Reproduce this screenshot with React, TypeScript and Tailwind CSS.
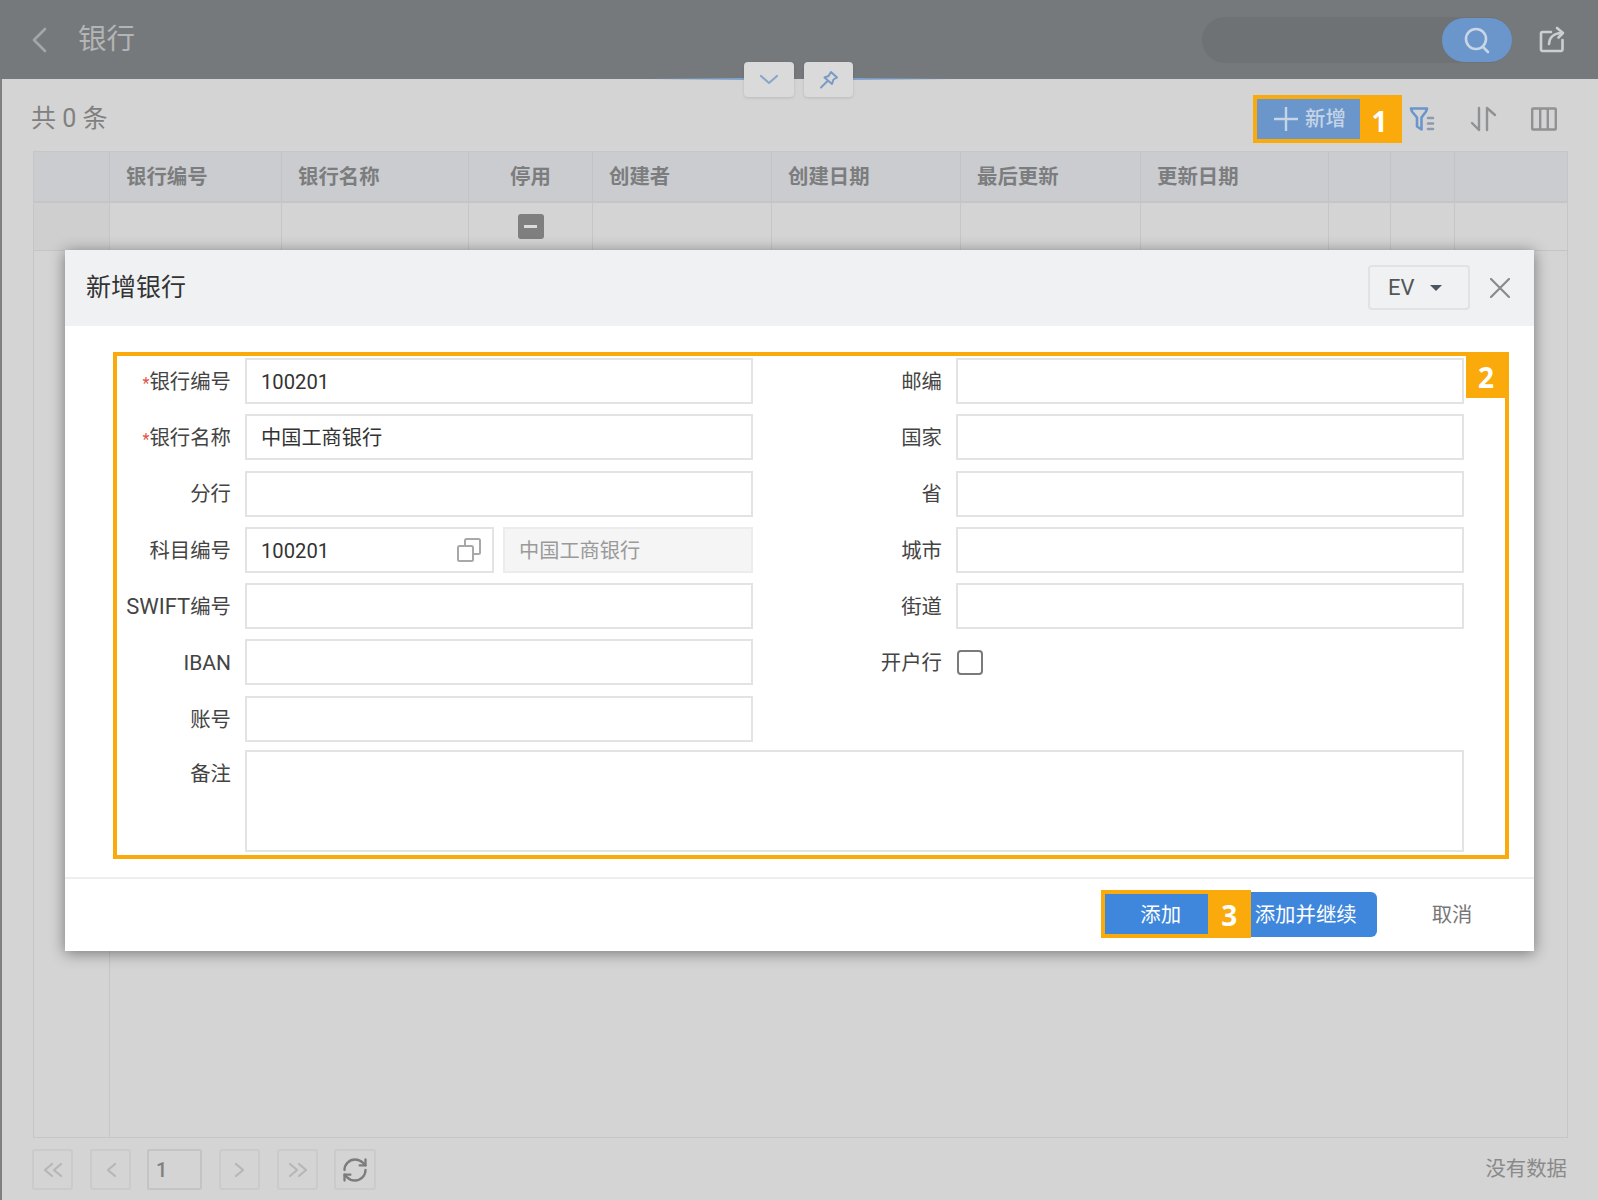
import React from "react";
import { RefreshCw } from "lucide-react";

const cols = [
  { w: "w-[76px]", t: "" },
  { w: "w-[172px]", t: "银行编号" },
  { w: "w-[187px]", t: "银行名称" },
  { w: "w-[124px]", t: "停用", c: true },
  { w: "w-[179px]", t: "创建者" },
  { w: "w-[189px]", t: "创建日期" },
  { w: "w-[180px]", t: "最后更新" },
  { w: "w-[188px]", t: "更新日期" },
  { w: "w-[62px]", t: "" },
  { w: "w-[64px]", t: "" },
  { w: "w-[112px]", t: "" },
];

function Field({ label, req, labelW, children }: { label: React.ReactNode; req?: boolean; labelW: string; children?: React.ReactNode }) {
  return (
    <div className="flex items-center h-[46px]">
      <div className={`${labelW} shrink-0 text-right text-[20.4px] text-[#444] pr-[14px] leading-none pt-[2px]`}>
        {req && <span className="text-[#e0533d] text-[16px]">*</span>}
        {label}
      </div>
      {children ?? <div className="h-[46px] flex-1 bg-white border-2 border-[#e3e3e3]" />}
    </div>
  );
}

function TextBox({ value }: { value: string }) {
  return (
    <div className="h-[46px] flex-1 bg-white border-2 border-[#e3e3e3] flex items-center pl-[14px] pt-[2px] text-[20.2px] text-[#333]">{value}</div>
  );
}

function PageBtn({ w = "w-[41px]", children }: { w?: string; children: React.ReactNode }) {
  return (
    <div className={`${w} h-[41px] border-2 border-[#cbcbcb] rounded-[3px] flex items-center justify-center text-[#b4b4b4]`}>{children}</div>
  );
}

function Badge({ children, className }: { children: React.ReactNode; className: string }) {
  return (
    <div className={`[font-family:'Open_Sans',sans-serif] font-bold text-white text-[28px] leading-none flex items-center justify-center ${className}`}>{children}</div>
  );
}

function Chev({ d }: { d: string }) {
  return (
    <svg width="20" height="16" viewBox="0 0 20 16" fill="none" stroke="#b6b6b6" strokeWidth="2.2" strokeLinecap="round" strokeLinejoin="round">
      <path d={d} />
    </svg>
  );
}

export default function App() {
  return (
    <div className="relative w-[1598px] h-[1200px] overflow-hidden bg-[#d4d4d4] flex flex-col [font-family:Roboto,'Noto_Sans_CJK_SC',sans-serif]">
      {/* header */}
      <header className="h-[79px] shrink-0 bg-[#76797b] flex items-center pl-[31px] pr-[33px]">
        <svg width="16" height="26" viewBox="0 0 16 26" fill="none" stroke="#a4a6a7" strokeWidth="2.6" strokeLinecap="round" strokeLinejoin="round">
          <path d="M14 2 L3 13 L14 24" />
        </svg>
        <div className="ml-[31px] mt-[2px] text-[28.5px] text-[#b3b4b5] leading-none">银行</div>
        <div className="ml-auto w-[310px] h-[46px] rounded-full bg-[#6f7274] flex justify-end items-center">
          <div className="w-[70px] h-[44px] rounded-full bg-[#6a96cc] flex items-center justify-center">
            <svg width="28" height="28" viewBox="0 0 28 28" fill="none" stroke="#c9d6e6" strokeWidth="2.6" strokeLinecap="round">
              <circle cx="13" cy="13" r="10" />
              <path d="M20 21 L25 26" />
            </svg>
          </div>
        </div>
        <svg className="ml-[27px] mt-[-1px]" width="26" height="27" viewBox="0 0 26 27" fill="none" stroke="#cdcecf" strokeWidth="2.6" strokeLinecap="round" strokeLinejoin="round">
          <path d="M12 6 H3.5 a1.5 1.5 0 0 0 -1.5 1.5 V23.5 a1.5 1.5 0 0 0 1.5 1.5 H22 a1.5 1.5 0 0 0 1.5 -1.5 V14" />
          <path d="M10 18 C10.5 11 14 7.5 23 7 M18 2 L24 7 L19.5 11.5" />
        </svg>
      </header>

      {/* collapse tabs */}
      <div className="absolute left-[650px] top-[78px] w-[94px] h-[2px] bg-gradient-to-r from-transparent to-[#7fa3cf]" />
      <div className="absolute left-[853px] top-[78px] w-[100px] h-[2px] bg-gradient-to-l from-transparent to-[#7fa3cf]" />
      <div className="absolute left-[744px] top-[62px] w-[50px] h-[35px] bg-[#dadada] rounded-[4px] shadow-[0_1px_3px_rgba(0,0,0,0.12)] flex items-center justify-center">
        <svg width="20" height="11" viewBox="0 0 20 11" fill="none" stroke="#8aa6c9" strokeWidth="2.2" strokeLinecap="round" strokeLinejoin="round">
          <path d="M2 2 L10 9 L18 2" />
        </svg>
      </div>
      <div className="absolute left-[804px] top-[62px] w-[49px] h-[35px] bg-[#dadada] rounded-[4px] shadow-[0_1px_3px_rgba(0,0,0,0.12)] flex items-center justify-center">
        <svg width="20" height="20" viewBox="0 0 20 20" fill="none" stroke="#7a9bc6" strokeWidth="2" strokeLinecap="round" strokeLinejoin="round">
          <path d="M12 2 L18 7.5 L14.5 9.5 L13 14 L5.5 7.5 L9.5 6 Z" />
          <path d="M8 11.5 L2 17.5" />
        </svg>
      </div>

      <div className="flex-1 flex flex-col border-l-2 border-[#808080] pl-[31px] pr-[30px] min-h-0">
        {/* toolbar */}
        <div className="h-[72px] shrink-0 flex items-center">
          <div className="text-[25px] text-[#808080] leading-none mt-[6px] -ml-[2px]">共 0 条</div>
          <div className="ml-auto flex items-center mt-[8px] mr-[11px]">
            <div className="w-[149px] h-[48px] bg-[#fbaa0c] flex items-center pl-[4px]">
              <div className="w-[103px] h-[40px] bg-[#6a96cc] flex items-center pl-[17px] text-[#c6d4e5] text-[20.4px] font-medium leading-none">
                <svg width="24" height="24" viewBox="0 0 24 24" stroke="#c6d4e5" strokeWidth="2.4" className="shrink-0">
                  <path d="M12 0 V24 M0 12 H24" />
                </svg>
                <span className="ml-[7px] whitespace-nowrap">新增</span>
              </div>
              <Badge className="w-[42px] h-[40px] pr-[3px] pt-[3px]">1</Badge>
            </div>
            <svg className="ml-[7px]" width="27" height="26" viewBox="0 0 27 26" fill="none" stroke="#6a96cc" strokeWidth="2.6" strokeLinejoin="round" strokeLinecap="round">
              <path d="M2 2.5 H18 L17 5.5 L12.5 11.5 V23.5 L8 20.5 V11.5 L3 5.5 Z" />
              <path d="M19 12 H24 M19 17.5 H24 M19 23 H24" stroke="#8a9bb0" />
            </svg>
            <svg className="ml-[34px]" width="27" height="26" viewBox="0 0 27 26" fill="none" stroke="#8f9193" strokeWidth="2.4" strokeLinecap="round" strokeLinejoin="round">
              <path d="M9 2 V24 L2 17" />
              <path d="M17 24 V2 L25 9" />
            </svg>
            <svg className="ml-[34px]" width="26" height="24" viewBox="0 0 26 24" fill="none" stroke="#8f9193" strokeWidth="2.4" strokeLinejoin="round">
              <rect x="1.2" y="1.5" width="23.6" height="21" rx="1" />
              <path d="M9.2 1.5 V22.5 M16.8 1.5 V22.5" />
            </svg>
          </div>
        </div>

        {/* table */}
        <div className="w-[1535px] h-[987px] shrink-0 border border-[#c6c6c6] flex flex-col">
          <div className="h-[51px] shrink-0 flex bg-[#cbcccf] border-b-2 border-[#c4c5c7]">
            {cols.map((c, i) => (
              <div key={i} className={`${c.w} shrink-0 border-r border-[#c2c3c5] last:border-r-0 flex items-center pt-[2px] text-[20.4px] font-bold text-[#7c7d7f] leading-none ${c.c ? "justify-center" : "pl-[16px]"}`}>
                {c.t}
              </div>
            ))}
          </div>
          <div className="h-[48px] shrink-0 flex border-b border-[#c4c5c7]">
            {cols.map((c, i) => (
              <div key={i} className={`${c.w} shrink-0 border-r border-[#c6c6c6] last:border-r-0 flex items-center justify-center ${i === 0 ? "bg-[#cfcfd0]" : ""}`}>
                {c.c && (
                  <div className="w-[26px] h-[25px] rounded-[3px] bg-[#7f7f7f] flex items-center justify-center">
                    <div className="w-[13px] h-[3px] bg-[#dcdcdc]" />
                  </div>
                )}
              </div>
            ))}
          </div>
          <div className="flex-1 flex">
            <div className="w-[76px] border-r border-[#c6c6c6]" />
          </div>
        </div>

        {/* pager */}
        <div className="flex-1 flex items-start pt-[11px] -ml-[1px]">
          <PageBtn><Chev d="M9 2 L2 8 L9 14 M18 2 L11 8 L18 14" /></PageBtn>
          <div className="ml-[17px]">
            <PageBtn><Chev d="M14 2 L7 8 L14 14" /></PageBtn>
          </div>
          <div className="ml-[16px] w-[55px] h-[41px] border-2 border-[#c4c4c4] rounded-[2px] flex items-center pl-[7px] text-[20px] font-medium text-[#808080]">1</div>
          <div className="ml-[17px]">
            <PageBtn><Chev d="M6 2 L13 8 L6 14" /></PageBtn>
          </div>
          <div className="ml-[17px]">
            <PageBtn><Chev d="M2 2 L9 8 L2 14 M11 2 L18 8 L11 14" /></PageBtn>
          </div>
          <div className="ml-[16px]">
            <PageBtn w="w-[42px]"><RefreshCw size={28} strokeWidth={2} className="text-[#7c7c7c]" /></PageBtn>
          </div>
          <div className="ml-auto mt-[10px] mr-[1px] text-[20.4px] text-[#8a8a8a] leading-none">没有数据</div>
        </div>
      </div>

      {/* modal */}
      <div className="absolute left-[65px] top-[250px] w-[1469px] h-[701px] bg-white shadow-[0_2px_14px_rgba(0,0,0,0.45)] flex flex-col">
        <div className="h-[76px] shrink-0 bg-[#eff1f3] flex items-center pl-[21px] pr-[24px]">
          <div className="text-[25px] text-[#333] leading-none mt-[-2px]">新增银行</div>
          <div className="ml-auto w-[102px] h-[45px] border-2 border-[#e0e2e4] rounded-[4px] flex items-center pl-[18px] text-[22px] text-[#555] leading-none mt-[-1px]">
            EV
            <span className="ml-[15px] w-0 h-0 border-l-[6px] border-r-[6px] border-t-[6px] border-l-transparent border-r-transparent border-t-[#4a5560]" />
          </div>
          <svg className="ml-[20px]" width="20" height="20" viewBox="0 0 20 20" stroke="#8a8a8a" strokeWidth="2.2" strokeLinecap="round">
            <path d="M1 1 L19 19 M19 1 L1 19" />
          </svg>
        </div>

        <div className="relative pt-[32px] flex-1">
          {/* annotation 2 */}
          <div className="absolute left-[48px] top-[26px] w-[1396px] h-[507px] border-4 border-[#fbaa0c] pointer-events-none">
            <Badge className="absolute right-[-4px] top-[-4px] w-[43px] h-[46px] bg-[#fbaa0c] pt-[3px] pr-[3px]">2</Badge>
          </div>
          <div className="flex">
            <div className="w-[687.5px] flex flex-col gap-y-[10.3px]">
              <Field label="银行编号" req labelW="w-[180px]"><TextBox value="100201" /></Field>
              <Field label="银行名称" req labelW="w-[180px]"><TextBox value="中国工商银行" /></Field>
              <Field label="分行" labelW="w-[180px]" />
              <Field label="科目编号" labelW="w-[180px]">
                <div className="flex flex-1 gap-[9px]">
                  <div className="w-[249px] h-[46px] bg-white border-2 border-[#e3e3e3] flex items-center pl-[14px] pr-[11px] pt-[2px] text-[20.2px] text-[#333]">
                    100201
                    <svg className="ml-auto mt-[-2px]" width="24" height="24" viewBox="0 0 24 24" fill="none" stroke="#a8a8a8" strokeWidth="2" strokeLinejoin="round">
                      <rect x="1" y="8" width="15" height="15" rx="1.5" />
                      <path d="M8 8 V2.5 a1.5 1.5 0 0 1 1.5 -1.5 H21.5 a1.5 1.5 0 0 1 1.5 1.5 V14.5 a1.5 1.5 0 0 1 -1.5 1.5 H16" />
                    </svg>
                  </div>
                  <div className="flex-1 h-[46px] bg-[#f5f5f5] border-2 border-[#ececec] flex items-center pl-[14px] pt-[2px] text-[20.2px] text-[#9a9a9a]">中国工商银行</div>
                </div>
              </Field>
              <Field label={<><span className="text-[22px]">SWIFT</span>编号</>} labelW="w-[180px]" />
              <Field label={<span className="text-[21px]">IBAN</span>} labelW="w-[180px]" />
              <Field label="账号" labelW="w-[180px]" />
            </div>
            <div className="ml-[88.5px] w-[622.5px] flex flex-col gap-y-[10.3px]">
              <Field label="邮编" labelW="w-[115px]" />
              <Field label="国家" labelW="w-[115px]" />
              <Field label="省" labelW="w-[115px]" />
              <Field label="城市" labelW="w-[115px]" />
              <Field label="街道" labelW="w-[115px]" />
              <Field label="开户行" labelW="w-[115px]">
                <div className="ml-[1px] w-[26px] h-[25px] rounded-[4px] border-2 border-[#7a7a7a] bg-white" />
              </Field>
            </div>
          </div>
          <div className="flex mt-[8px]">
            <div className="w-[180px] shrink-0 text-right text-[20.4px] text-[#444] pr-[14px] pt-[14px] leading-none">备注</div>
            <div className="w-[1218.5px] h-[102px] bg-white border-2 border-[#e3e3e3]" />
          </div>
        </div>

        <div className="h-[74px] shrink-0 border-t-2 border-[#eeeeee] flex items-center justify-end pr-[61.5px] text-[20.4px] leading-none">
          <div className="w-[150px] h-[48px] bg-[#fbaa0c] flex items-center pl-[4px] mt-[-2px]">
            <div className="w-[103px] h-[40px] bg-[#3e87dc] text-white flex items-center justify-center pl-[9px] pt-[2px]">添加</div>
            <Badge className="w-[43px] h-[40px] pt-[2px]">3</Badge>
          </div>
          <div className="w-[126.5px] h-[45px] bg-[#3e87dc] text-white rounded-r-[6px] flex items-center pl-[4px] pt-[2px] mt-[-1px] whitespace-nowrap">添加并继续</div>
          <div className="ml-[54.5px] text-[#777]">取消</div>
        </div>
      </div>
    </div>
  );
}
